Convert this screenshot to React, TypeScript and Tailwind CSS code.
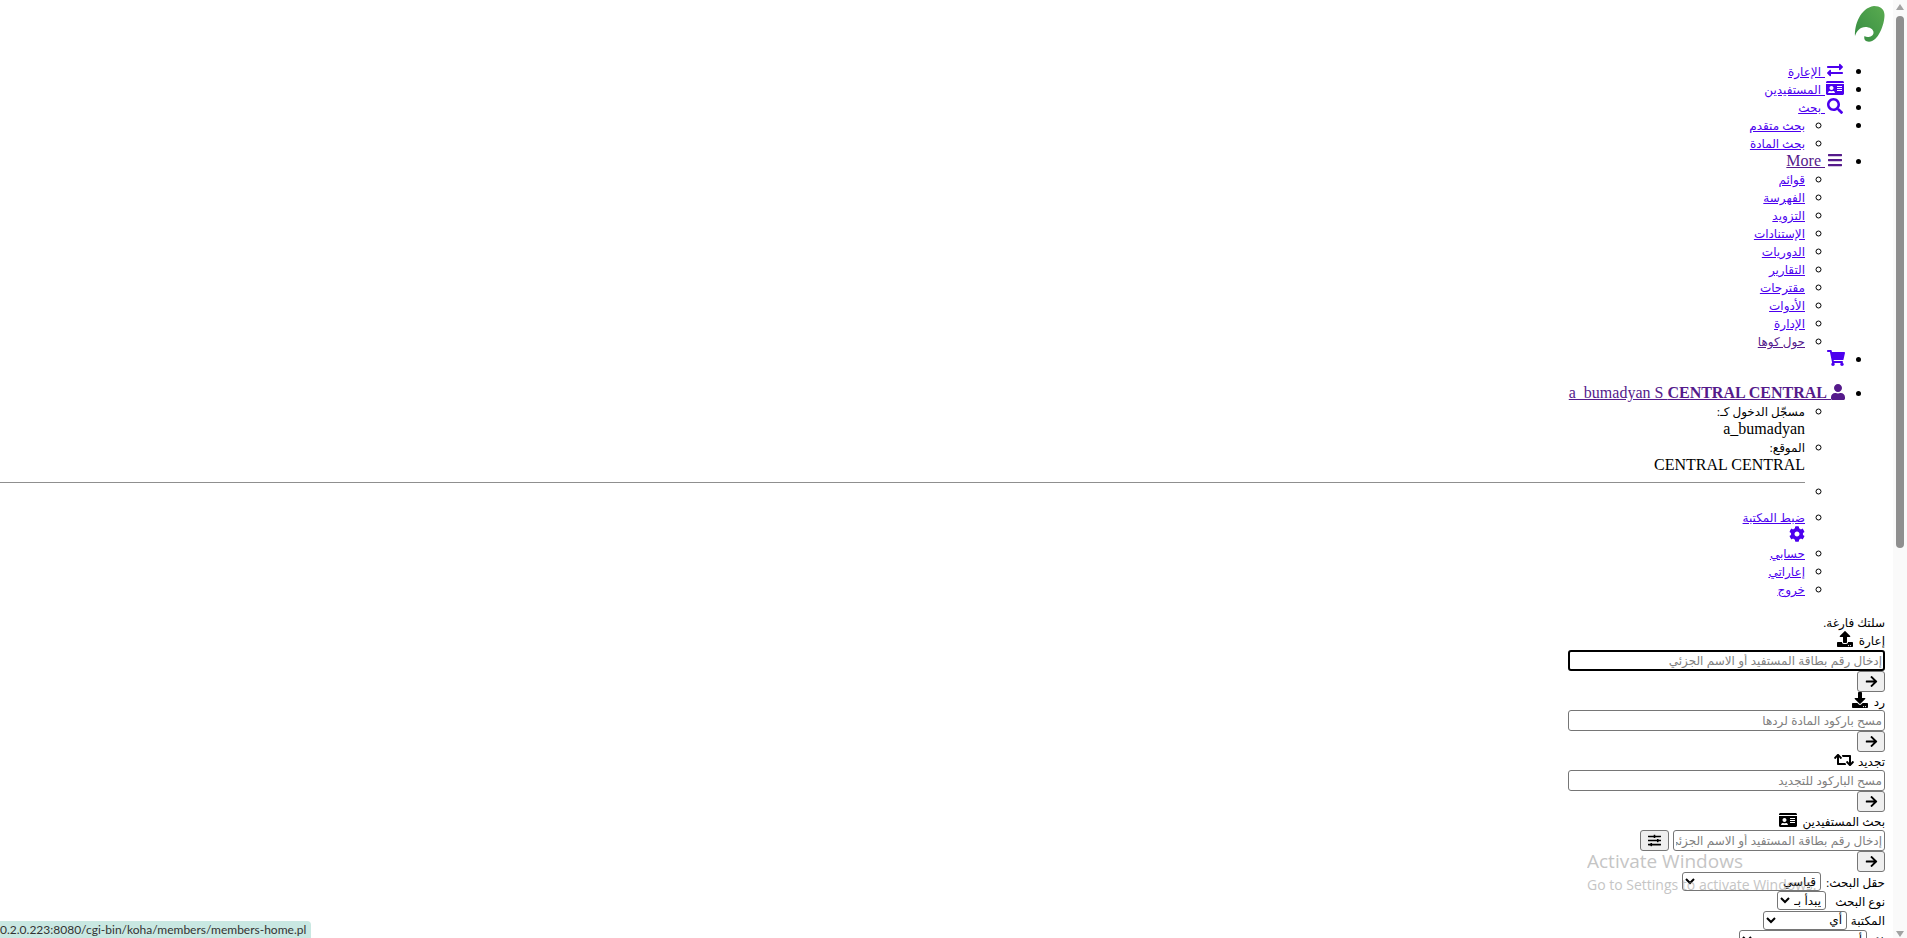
import React from "react";
import { FaExchangeAlt, FaIdCard, FaSearch, FaBars, FaShoppingCart, FaUser, FaCog, FaUpload, FaDownload, FaRetweet, FaArrowRight, FaSlidersH } from "react-icons/fa";

const blue = "text-[#4c00ee] underline";
const purple = "text-[#551a8b] underline";
const iconCls = "inline-block w-5 h-4 align-[-2px]";

function Ar({ children }: { children: React.ReactNode }) {
  return <span className="text-[12px] leading-none">{children}</span>;
}

function L({ children, visited }: { children: React.ReactNode; visited?: boolean }) {
  return <li><a href="#" className={visited ? purple : blue}>{children}</a></li>;
}

function ArrowBtn() {
  return (
    <button className="block w-[28px] h-[21px] bg-[#efefef] border border-[#767676] rounded-[3px] text-black">
      <FaArrowRight className="w-[13px] h-[13px] mx-auto" />
    </button>
  );
}

function Field({ placeholder, focus, width }: { placeholder: string; focus?: boolean; width?: string }) {
  return (
    <input
      placeholder={placeholder}
      className={
        (focus ? "border-2 border-black px-[1px] " : "border border-[#767676] px-[2px] ") +
        (width ?? "w-[317px]") +
        " block h-[21px] rounded-[3px] bg-white text-[12px] font-['Liberation_Sans','DejaVu_Sans',sans-serif] placeholder:text-[#808080]"
      }
    />
  );
}

function Sel({ value, w }: { value: string; w: string }) {
  return (
    <select className={w + " h-[19px] border border-[#767676] rounded-[3px] bg-white text-[12px] text-black font-['Liberation_Sans','DejaVu_Sans',sans-serif]"}>
      <option>{value}</option>
    </select>
  );
}

export default function App() {
  return (
    <div className="relative flex h-[938px] w-full overflow-hidden bg-white text-black text-[16px] leading-[18px] font-['Liberation_Serif','DejaVu_Sans',serif]">
      <div dir="rtl" className="flex-1 min-w-0 overflow-hidden px-2">
        <div className="h-[46px] pt-[5px]">
          <svg width="31" height="38" viewBox="0 0 31 38" className="block">
            <defs>
              <linearGradient id="leaf" x1="1" y1="0" x2="0" y2="1">
                <stop offset="0" stopColor="#5aab50" />
                <stop offset="1" stopColor="#358c42" />
              </linearGradient>
            </defs>
            <path
              d="M20 1 C26 1 30.5 4 30.5 10 C30.5 20 24 36.7 15 36.7 C11.5 36.7 9.5 34.5 10.5 31 C13 33 19 32 19.5 28 C20 24 15 22 11.5 22 C6 22 2.5 26 1 31 C0.5 20 6 3 20 1 Z"
              fill="url(#leaf)"
            />
          </svg>
        </div>

        <ul className="list-disc pr-10 mt-4 mb-[15px]">
          <L><FaExchangeAlt className={iconCls} /> <Ar>الإعارة</Ar> </L>
          <L><FaIdCard className={iconCls} /> <Ar>المستفيدين</Ar> </L>
          <L><FaSearch className={iconCls} /> <Ar>بحث</Ar> </L>
          <li>
            <ul className="list-[circle] pr-10">
              <L><Ar>بحث متقدم</Ar></L>
              <L><Ar>بحث المادة</Ar></L>
            </ul>
          </li>
          <L visited><FaBars className={iconCls} /> More </L>
          <li className="list-none">
            <ul className="list-[circle] pr-10">
              <L><Ar>قوائم</Ar></L>
              <L><Ar>الفهرسة</Ar></L>
              <L><Ar>التزويد</Ar></L>
              <L><Ar>الإستنادات</Ar></L>
              <L><Ar>الدوريات</Ar></L>
              <L><Ar>التقارير</Ar></L>
              <L><Ar>مقترحات</Ar></L>
              <L><Ar>الأدوات</Ar></L>
              <L><Ar>الإدارة</Ar></L>
              <L visited><Ar>حول كوها</Ar></L>
            </ul>
          </li>
          <li className="h-[34px]"><a href="#" className="text-[#4c00ee]"><FaShoppingCart className="inline-block w-[18px] h-4 align-[-2px]" /></a></li>
          <li>
            <a href="#" className={purple}>
              <FaUser className="inline-block w-[14px] h-4 align-[-2px]" /> a_bumadyan S <span className="font-bold">CENTRAL CENTRAL</span>
            </a>
            <ul className="list-[circle] pr-10">
              <li><Ar>مسجّل الدخول كـ:</Ar><br /><span>a_bumadyan</span></li>
              <li><Ar>الموقع:</Ar><br /><span>CENTRAL CENTRAL</span></li>
              <li className="h-[26px]"><hr className="my-2 ml-[-100px] border-t border-[#8f8f8f]" /></li>
              <li>
                <a href="#" className={blue}><Ar>ضبط المكتبة</Ar></a>
                <br />
                <a href="#" className="text-[#4c00ee]"><FaCog className="inline-block w-4 h-4 align-[-2px]" /></a>
              </li>
              <L><Ar>حسابي</Ar></L>
              <L><Ar>إعاراتي</Ar></L>
              <L><Ar>خروج</Ar></L>
            </ul>
          </li>
        </ul>

        <div><Ar>سلتك فارغة.</Ar></div>
        <div className="h-[19px]"><Ar>إعارة</Ar> <FaUpload className={iconCls} /></div>
        <Field placeholder="إدخال رقم بطاقة المستفيد أو الاسم الجزئي" focus />
        <ArrowBtn />
        <div><Ar>رد</Ar> <FaDownload className={iconCls} /></div>
        <Field placeholder="مسح باركود المادة لردها" />
        <ArrowBtn />
        <div><Ar>تجديد</Ar> <FaRetweet className={iconCls} /></div>
        <Field placeholder="مسح الباركود للتجديد" />
        <ArrowBtn />
        <div><Ar>بحث المستفيدين</Ar> <FaIdCard className={iconCls} /></div>
        <div className="flex gap-[4px]">
          <Field placeholder="إدخال رقم بطاقة المستفيد أو الاسم الجزئي" width="w-[212px]" />
          <button className="w-[29px] h-[21px] bg-[#efefef] border border-[#767676] rounded-[3px]">
            <FaSlidersH className="w-[13px] h-[13px] mx-auto" />
          </button>
        </div>
        <ArrowBtn />
        <div className="flex items-center h-[19px]"><span className="w-[64px] shrink-0"><Ar>حقل البحث:</Ar></span><Sel value="قياسي" w="w-[139px]" /></div>
        <div className="flex items-center h-[19px]"><span className="w-[59px] shrink-0"><Ar>نوع البحث</Ar></span><Sel value="يبدأ بـ" w="w-[49px]" /></div>
        <div className="flex items-center h-[20px]"><span className="w-[38px] shrink-0"><Ar>المكتبة</Ar></span><Sel value="أي" w="w-[84px]" /></div>
        <div className="flex items-center h-[19px]"><span className="w-[18px] shrink-0"><Ar>فئة</Ar></span><Sel value="أي" w="w-[128px]" /></div>
      </div>

      <div className="relative w-[14px] shrink-0 bg-[#fafafa] flex flex-col items-center">
        <div className="mt-[4px] w-0 h-0 border-x-[4px] border-x-transparent border-b-[6px] border-b-[#a3a3a3]" />
        <div className="mt-[6px] w-[8px] h-[532px] rounded-[4px] bg-[#8f8f8f]" />
        <div className="mt-auto mb-[1px] w-0 h-0 border-x-[4px] border-x-transparent border-t-[6px] border-t-[#a3a3a3]" />
      </div>

      <div className="absolute left-[1587px] top-[846px] font-['Open_Sans',sans-serif] text-[#8c8c8c] opacity-50 pointer-events-none">
        <div className="text-[19px] leading-[30px]">Activate Windows</div>
        <div className="text-[14px] leading-[22px] mt-[-2px]">Go to Settings to activate Windows.</div>
      </div>

      <div className="absolute left-0 bottom-0 w-[311px] h-[17px] bg-[#c9e8e2] rounded-tr-[4px] overflow-hidden whitespace-nowrap text-[12px] leading-[17px] text-[#333333] font-['Lato',sans-serif]">
        0.2.0.223:8080/cgi-bin/koha/members/members-home.pl
      </div>
    </div>
  );
}
